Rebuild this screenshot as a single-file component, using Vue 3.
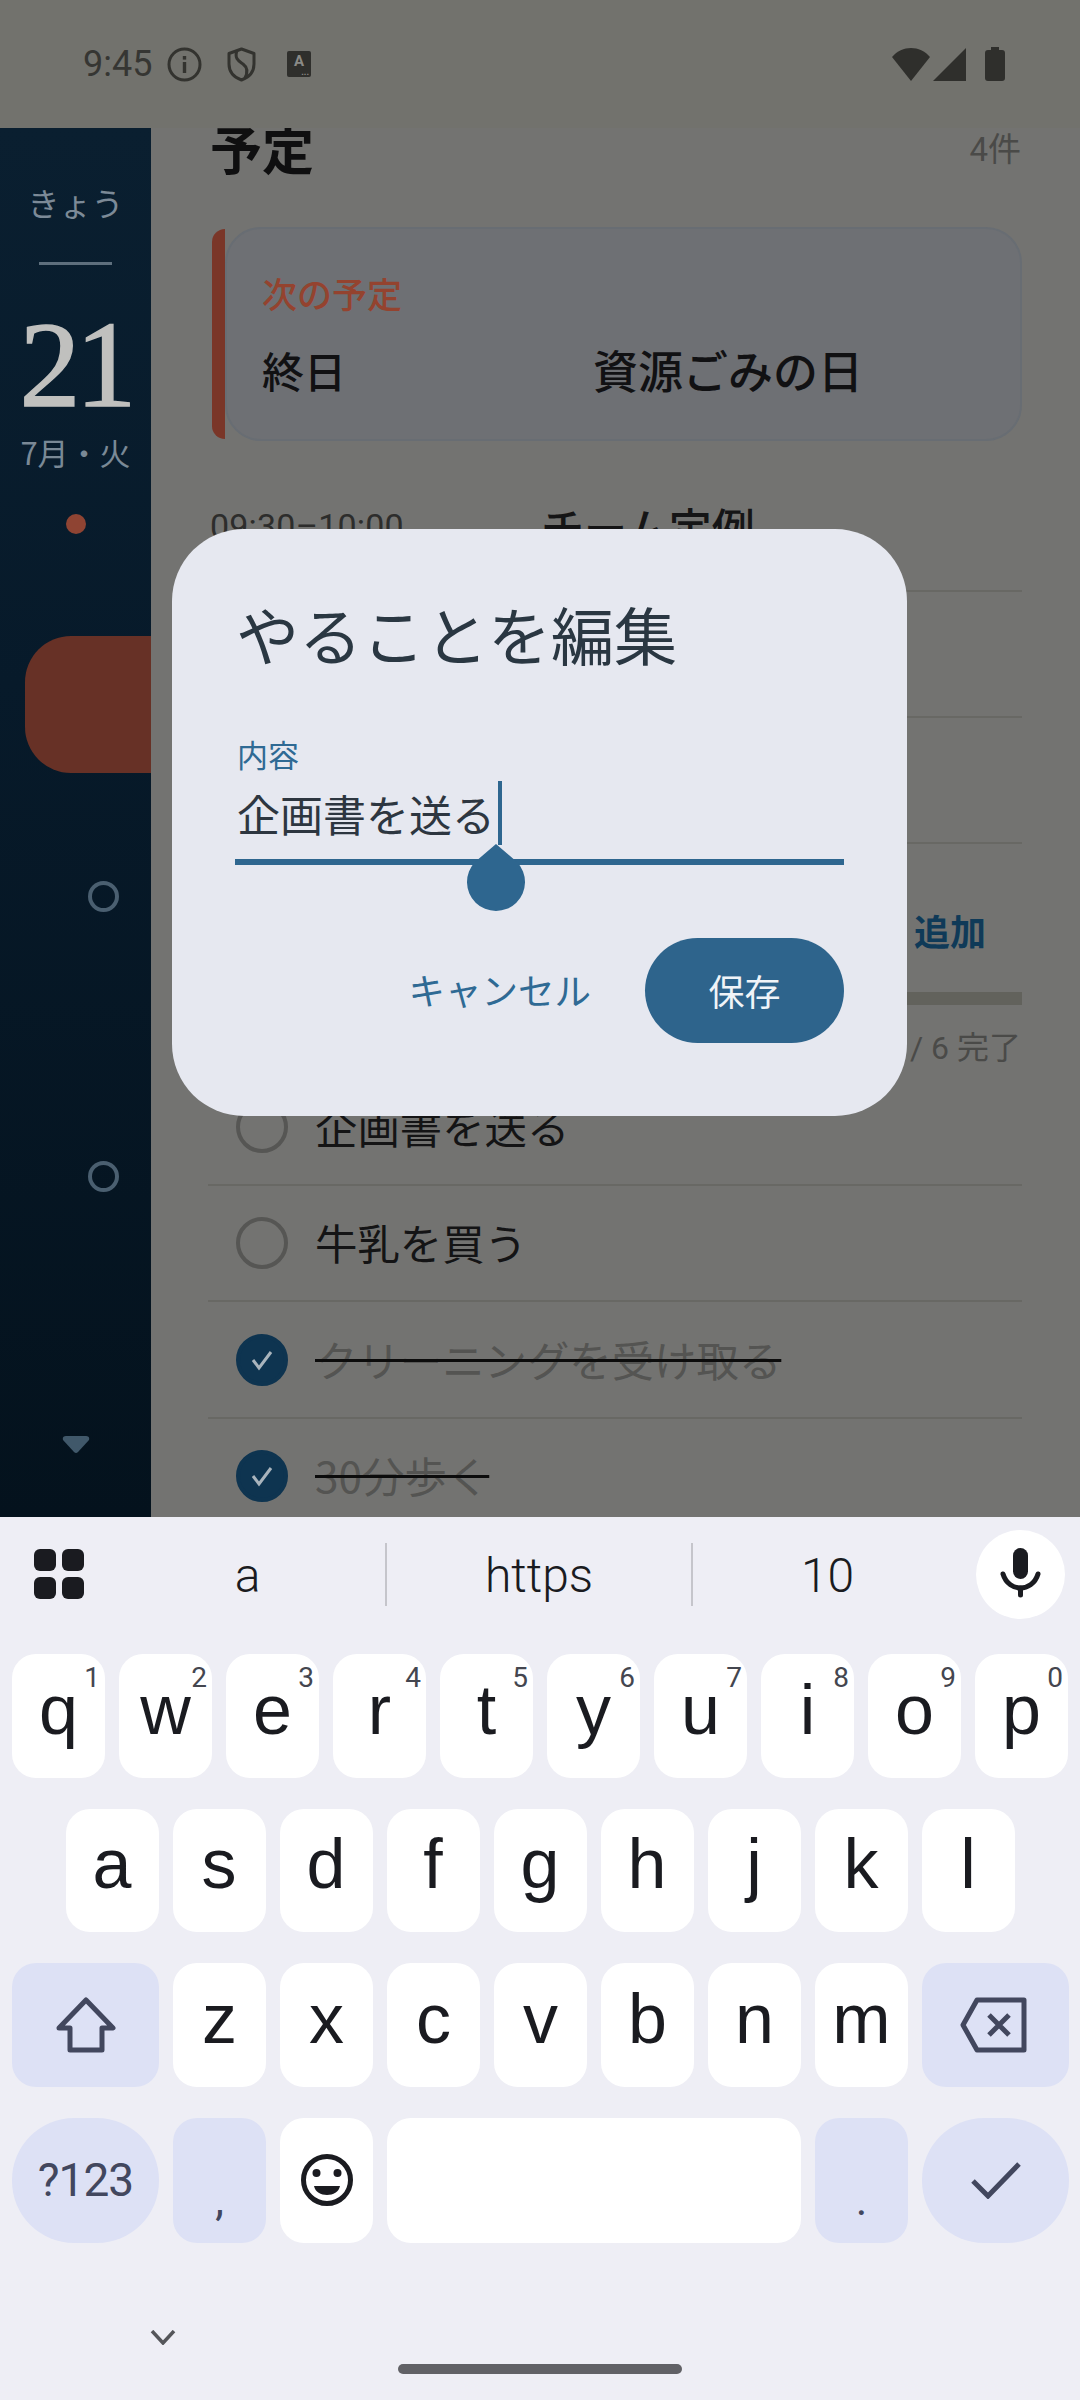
<template>
  <div class="screen">
    <div class="status-bar">
      <span class="clock">9:45</span>
      <svg class="ic-info" width="35" height="35" viewBox="0 0 35 35">
        <circle cx="17.5" cy="17.5" r="15.5" fill="none" stroke="#33332f" stroke-width="3" />
        <rect x="15.8" y="15" width="3.4" height="11" fill="#33332f" />
        <rect x="15.8" y="9" width="3.4" height="3.6" fill="#33332f" />
      </svg>
      <svg class="ic-shield" width="29" height="35" viewBox="0 0 29 35">
        <path d="M14.5 2 L27 6.5 V17 C27 25 21.500 30.500 14.500 33 C7.500 30.500 2 25 2 17 V6.500 Z" fill="none" stroke="#33332f" stroke-width="3" stroke-linejoin="round" />
        <path d="M10 3.500 C7 12 12 14 16 17 C20 20 21.500 24 18 31" fill="none" stroke="#33332f" stroke-width="3" />
      </svg>
      <div class="ic-a">
        <span>A</span>
        <i>...</i>
      </div>
      <div class="status-right">
        <svg width="38" height="33" viewBox="0 0 38 33"><path d="M0 9 C10 -3 28 -3 38 9 L19 33 Z" fill="#2f2f2c" /></svg>
        <svg width="33" height="33" viewBox="0 0 33 33"><path d="M33 0 V33 H0 Z" fill="#2f2f2c" /></svg>
        <svg class="ic-batt" width="20" height="34" viewBox="0 0 20 34"><path d="M6 0 H14 V3 H17 Q20 3 20 6 V31 Q20 34 17 34 H3 Q0 34 0 31 V6 Q0 3 3 3 H6 Z" fill="#2f2f2c" /></svg>
      </div>
    </div>

    <div class="body">
      <aside class="rail">
        <div class="rail-today">きょう</div>
        <div class="rail-line"></div>
        <div class="rail-day">21</div>
        <div class="rail-date">7月・火</div>
        <div class="rail-dot"></div>
        <div class="rail-pill"></div>
        <div class="rail-ring ring-a"></div>
        <div class="rail-ring ring-b"></div>
        <svg class="rail-tri" width="28" height="17" viewBox="0 0 28 17">
          <path d="M4 0 H24 Q28 0 27 4 L16 16 Q14 18 12 16 L1 4 Q0 0 4 0 Z" fill="#40586a" />
        </svg>
      </aside>

      <main class="content">
        <div class="head">
          <h2>予定</h2>
          <span>4件</span>
        </div>

        <div class="next-card">
          <div class="next-stripe"></div>
          <div class="next-body">
            <div class="next-label">次の予定</div>
            <div class="next-row">
              <span>終日</span>
              <span>資源ごみの日</span>
            </div>
          </div>
        </div>

        <div class="events">
          <div class="event" v-for="(ev, i) in events" :key="i">
            <span class="event-time">{{ ev.time }}</span>
            <span class="event-title">{{ ev.title }}</span>
          </div>
        </div>

        <div class="add-row">追加</div>
        <div class="progress"><div class="progress-fill" :style="{ width: doneRate + '%' }"></div></div>
        <div class="count">2 / 6 完了</div>

        <div class="todo" v-for="todo in todos" :key="todo.text">
          <span class="check" :class="{ on: todo.done }">
            <svg v-if="todo.done" width="28" height="24" viewBox="0 0 28 24">
              <path d="M5 12 L11 20 L23 4" fill="none" stroke="#a9b4bc" stroke-width="3" />
            </svg>
          </span>
          <span class="todo-text" :class="{ done: todo.done }">{{ todo.text }}</span>
        </div>
      </main>
    </div>

    <div class="keyboard">
      <div class="strip">
        <div class="apps"><i></i><i></i><i></i><i></i></div>
        <div class="sug sug-a">a</div>
        <div class="sep"></div>
        <div class="sug sug-b">https</div>
        <div class="sep"></div>
        <div class="sug sug-c">10</div>
        <div class="mic">
          <svg width="89" height="89" viewBox="0 0 89 89">
            <rect x="37" y="18" width="15" height="31" rx="7.500" fill="#1a1b20" />
            <path d="M27 44 C30 54 38 58 44.500 58 C51 58 59 54 62 44" fill="none" stroke="#1a1b20" stroke-width="5" stroke-linecap="round" />
            <path d="M44.500 58 V65" stroke="#1a1b20" stroke-width="5" stroke-linecap="round" />
          </svg>
        </div>
      </div>

      <div class="keys">
        <div class="row">
          <div class="key" v-for="k in row1" :key="k.ch">
            {{ k.ch }}<sup class="hint">{{ k.num }}</sup>
          </div>
        </div>
        <div class="row row-home">
          <div class="key" v-for="k in row2" :key="k">{{ k }}</div>
        </div>
        <div class="row">
          <div class="key wide accent">
            <svg width="60" height="56" viewBox="0 0 60 56">
              <path d="M30 3 L57 31 H46 V53 H14 V31 H3 Z" fill="none" stroke="#42475e" stroke-width="5" stroke-linejoin="round" />
            </svg>
          </div>
          <div class="key" v-for="k in row3" :key="k">{{ k }}</div>
          <div class="key wide accent">
            <svg class="ic-back" width="68" height="56" viewBox="0 0 68 56">
              <path d="M17 3 H64 V53 H17 L3 28 Z" fill="none" stroke="#42475e" stroke-width="5" stroke-linejoin="round" />
              <path d="M29 18 L49 38 M49 18 L29 38" fill="none" stroke="#42475e" stroke-width="5" />
            </svg>
          </div>
        </div>
        <div class="row">
          <div class="key wide accent pill sym">?123</div>
          <div class="key accent punct">,</div>
          <div class="key">
            <svg width="52" height="52" viewBox="0 0 52 52">
              <circle cx="26" cy="26" r="23.500" fill="none" stroke="#1a1b20" stroke-width="5" />
              <circle cx="15.500" cy="19" r="4" fill="#1a1b20" />
              <circle cx="36.500" cy="19" r="4" fill="#1a1b20" />
              <path d="M13 32 H39 C38 38 32 41 26 41 C20 41 14 38 13 32 Z" fill="#1a1b20" />
            </svg>
          </div>
          <div class="key space"></div>
          <div class="key accent punct">.</div>
          <div class="key wide accent pill">
            <svg width="52" height="38" viewBox="0 0 52 38">
              <path d="M3 20 L18 35 L49 3" fill="none" stroke="#42475e" stroke-width="5" />
            </svg>
          </div>
        </div>
      </div>

      <div class="kb-foot">
        <svg class="chevron" width="26" height="15" viewBox="0 0 26 15">
          <path d="M2 1 L13 13 L24 1" fill="none" stroke="#55565a" stroke-width="3.500" />
        </svg>
        <div class="home-bar"></div>
      </div>
    </div>

    <div class="dialog">
      <h3>やることを編集</h3>
      <div class="field">
        <label>内容</label>
        <div class="field-value">企画書を送る</div>
        <div class="caret"></div>
        <svg class="handle" width="58" height="67" viewBox="0 0 58 67">
          <path d="M29 0 L50 18 A29 29 0 1 1 8 18 Z" fill="#2e668f" />
        </svg>
      </div>
      <div class="actions">
        <span class="cancel">キャンセル</span>
        <span class="save">保存</span>
      </div>
    </div>
  </div>
</template>

<script setup>
const events = [
  { time: '09:30–10:00', title: 'チーム定例' },
  { time: '', title: '' },
  { time: '', title: '' }
]

const doneRate = 33

const todos = [
  { text: '企画書を送る', done: false },
  { text: '牛乳を買う', done: false },
  { text: 'クリーニングを受け取る', done: true },
  { text: '30分歩く', done: true }
]

const row1 = 'qwertyuiop'.split('').map((ch, i) => ({ ch, num: (i + 1) % 10 }))
const row2 = 'asdfghjkl'.split('')
const row3 = 'zxcvbnm'.split('')
</script>

<style scoped>
.screen {
  position: relative;
  width: 1080px;
  height: 2400px;
  overflow: hidden;
  background: #737371;
  font-family: "Noto Sans CJK JP", "Noto Sans", sans-serif;
  display: flex;
  flex-direction: column;
}

.status-bar {
  height: 128px;
  flex: none;
  background: #72726d;
  display: flex;
  align-items: center;
  padding: 0 75px 0 83px;
  box-sizing: border-box;
  color: #363633;
  position: relative;
  z-index: 1;
}

.clock {
  font-family: Roboto, sans-serif;
  font-size: 36px;
  width: 69px;
}

.ic-info {
  margin-left: 15px;
}

.ic-shield {
  margin-left: 25px;
}

.ic-a {
  margin-left: 31px;
  width: 24px;
  height: 26px;
  border-radius: 2px;
  background: #2f2f2c;
  color: #8a8a86;
  position: relative;
  font-family: Roboto, sans-serif;
  font-weight: 700;
  font-size: 15px;
  line-height: 20px;
  text-align: center;
}

.ic-a i {
  position: absolute;
  right: 2px;
  bottom: 2px;
  font-size: 9px;
  line-height: 6px;
  font-style: normal;
}

.status-right {
  margin-left: auto;
  display: flex;
  align-items: center;
  gap: 3px;
}

.ic-batt {
  margin-left: 16px;
}

.body {
  height: 1389px;
  flex: none;
  display: flex;
  overflow: hidden;
}

.rail {
  width: 151px;
  flex: none;
  background: linear-gradient(#0a1f30, #071a2a 40%, #04121d);
  display: flex;
  flex-direction: column;
  overflow: hidden;
}

.rail-today {
  margin-top: 54px;
  text-align: center;
  font-size: 32px;
  line-height: 40px;
  color: #7c8a97;
}

.rail-line {
  margin: 40px auto 0;
  width: 73px;
  height: 3px;
  background: #5e6f7d;
}

.rail-day {
  margin-top: 50px;
  height: 100px;
  line-height: 100px;
  text-align: center;
  font-family: "Liberation Serif", serif;
  font-size: 122px;
  letter-spacing: -5px;
  -webkit-text-stroke: 1.5px #c0c0be;
  color: #c0c0be;
}

.rail-date {
  margin-top: 17px;
  text-align: center;
  font-size: 31px;
  line-height: 40px;
  color: #7a8996;
}

.rail-dot {
  margin: 42px auto 0;
  width: 20px;
  height: 20px;
  border-radius: 50%;
  background: #8f4433;
}

.rail-pill {
  margin: 102px 0 0 25px;
  width: 126px;
  height: 137px;
  flex: none;
  border-radius: 46px 0 0 46px;
  background: #673126;
}

.rail-ring {
  width: 31px;
  height: 31px;
  flex: none;
  box-sizing: border-box;
  margin-left: 88px;
  border: 4px solid #4a5f70;
  border-radius: 50%;
}

.ring-a {
  margin-top: 108px;
}

.ring-b {
  margin-top: 249px;
}

.rail-tri {
  margin: 244px 0 0 62px;
  flex: none;
}

.content {
  flex: 1;
  min-width: 0;
  margin-top: -8px;
  padding: 0 58px 0 57px;
  box-sizing: border-box;
  background: #737371;
}

.head {
  display: flex;
  justify-content: space-between;
  align-items: center;
  height: 60px;
  padding: 0 1px 0 2px;
}

.head h2 {
  margin: -5px 0 0;
  font-size: 52px;
  line-height: 60px;
  font-weight: 700;
  color: #0f0f10;
}

.head span {
  font-family: Roboto, "Noto Sans CJK JP", sans-serif;
  font-size: 33px;
  color: #4a4a48;
  margin-top: -6px;
}

.next-card {
  margin: 47px 0 0 4px;
  height: 214px;
  display: flex;
}

.next-stripe {
  width: 13px;
  flex: none;
  margin: 2px 0;
  background: #7a3628;
  border-radius: 14px 0 0 14px;
}

.next-body {
  flex: 1;
  box-sizing: border-box;
  padding: 41px 0 0 35px;
  border: 2px solid #686d73;
  border-radius: 36px;
  background: #6e7074;
}

.next-label {
  font-size: 35px;
  line-height: 46px;
  font-weight: 500;
  color: #94432f;
}

.next-row {
  margin-top: 24px;
  display: grid;
  grid-template-columns: 331px 1fr;
  font-size: 42px;
  line-height: 60px;
  font-weight: 500;
  color: #111113;
}

.next-row span:last-child {
  font-size: 45px;
}

.events {
  margin-top: 25px;
}

.event {
  height: 126px;
  box-sizing: border-box;
  border-bottom: 2px solid #686864;
  display: grid;
  grid-template-columns: 331px 1fr;
  align-items: center;
  padding: 0 0 4px 2px;
  color: #151516;
}

.event-time {
  font-family: Roboto, sans-serif;
  font-size: 34px;
  letter-spacing: 0.2px;
  color: #2d2d2c;
}

.event-title {
  font-size: 43px;
  font-weight: 500;
}

.add-row {
  margin-top: 61px;
  height: 50px;
  line-height: 50px;
  text-align: right;
  padding-right: 36px;
  font-size: 36px;
  font-weight: 700;
  color: #0f3a58;
}

.progress {
  margin-top: 37px;
  height: 13px;
  background: #62625c;
}

.progress-fill {
  height: 100%;
  background: #0f3a58;
}

.count {
  margin-top: 21px;
  height: 44px;
  line-height: 44px;
  text-align: right;
  padding-right: 1px;
  margin-bottom: -1px;
  font-size: 32px;
  color: #4a4a48;
  font-family: Roboto, "Noto Sans CJK JP", sans-serif;
}

.todo {
  height: 116.500px;
  box-sizing: border-box;
  display: flex;
  align-items: center;
  padding: 1px 0 0 28px;
  border-bottom: 2px solid #686864;
}

.check {
  width: 52px;
  height: 52px;
  box-sizing: border-box;
  border: 4px solid #565654;
  border-radius: 50%;
  margin-right: 27px;
  display: flex;
  align-items: center;
  justify-content: center;
}

.check.on {
  background: #0e3450;
  border-color: #0e3450;
}

.todo-text {
  font-size: 42.400px;
  margin-top: -3px;
  color: #141415;
}

.todo-text.done {
  color: #545452;
  text-decoration: line-through;
  text-decoration-color: #0c0c0c;
  text-decoration-thickness: 3px;
}

.keyboard {
  flex: none;
  height: 883px;
  background: #eeeef5;
  display: flex;
  flex-direction: column;
}

.strip {
  height: 137px;
  flex: none;
  box-sizing: border-box;
  padding-top: 13px;
  display: flex;
  align-items: flex-start;
  font-family: Roboto, sans-serif;
  font-size: 48px;
  font-weight: 300;
  color: #1a1b20;
}

.apps {
  margin: 19px 26px 0 34px;
  width: 50px;
  display: grid;
  grid-template-columns: 22px 22px;
  grid-auto-rows: 22px;
  gap: 6px;
}

.apps i {
  background: #1a1b20;
  border-radius: 6px;
}

.sug {
  height: 89px;
  line-height: 91px;
  text-align: center;
}

.sug-a {
  width: 275px;
}

.sug-b {
  width: 304px;
}

.sug-c {
  width: 269px;
}

.sep {
  width: 2px;
  height: 63px;
  margin-top: 13px;
  background: #c5c5cb;
}

.mic {
  margin-left: 14px;
  width: 89px;
  height: 89px;
  border-radius: 50%;
  background: #fff;
}

.keys {
  padding: 0 12px;
  display: flex;
  flex-direction: column;
  gap: 31px;
}

.row {
  display: flex;
  gap: 14px;
  height: 123.500px;
}

.row:last-child {
  height: 125px;
}

.row-home {
  padding: 0 53.500px;
}

.key {
  position: relative;
  width: 93px;
  flex: none;
  border-radius: 24px;
  background: #fff;
  display: flex;
  align-items: center;
  justify-content: center;
  padding-bottom: 12px;
  box-sizing: border-box;
  font-family: "Liberation Sans", Arial, sans-serif;
  font-size: 70px;
  color: #1a1b20;
}

.key svg {
  margin-top: 12px;
}

.key .ic-back {
  margin-right: 4px;
}

.hint {
  position: absolute;
  top: 10px;
  right: 5px;
  font-family: Roboto, sans-serif;
  font-size: 28px;
  line-height: 28px;
  color: #44464f;
}

.wide {
  width: 147px;
}

.accent {
  background: #dde1f5;
  color: #42475e;
}

.pill {
  border-radius: 62px;
}

.sym {
  font-family: Roboto, sans-serif;
  font-size: 46px;
  letter-spacing: -1px;
  padding-bottom: 0;
}

.punct {
  font-family: Roboto, sans-serif;
  font-size: 44px;
  padding: 40px 0 0;
}

.space {
  width: 414px;
}

.kb-foot {
  display: flex;
  flex-direction: column;
}

.chevron {
  margin: 87px 0 0 150px;
}

.home-bar {
  align-self: center;
  margin-top: 19px;
  width: 284px;
  height: 10px;
  border-radius: 5px;
  background: #616166;
}

.dialog {
  position: absolute;
  left: 172px;
  top: 529px;
  width: 735px;
  height: 587px;
  box-sizing: border-box;
  padding: 73px 63px 0 64px;
  border-radius: 72px;
  background: #e6e8f0;
}

.dialog h3 {
  margin: 0;
  font-size: 63px;
  line-height: 62px;
  font-weight: 400;
  color: #2a3742;
}

.field {
  position: relative;
  margin: 72px 0 0 -1px;
  height: 129px;
  box-sizing: border-box;
  padding-left: 2px;
  border-bottom: 6px solid #2e668f;
}

.field label {
  display: block;
  font-size: 31px;
  line-height: 36px;
  margin-top: 4px;
  color: #2f6a94;
}

.field-value {
  margin-top: 15px;
  font-size: 43px;
  line-height: 52px;
  color: #2d3640;
}

.caret {
  position: absolute;
  left: 263px;
  top: 45px;
  width: 4px;
  height: 64px;
  background: #2e668f;
}

.handle {
  position: absolute;
  left: 232px;
  top: 108px;
}

.actions {
  margin-top: 73px;
  display: flex;
  justify-content: flex-end;
  align-items: center;
}

.cancel {
  font-size: 36.500px;
  color: #2f6a94;
  margin-right: 54px;
  padding-bottom: 2px;
}

.save {
  width: 199px;
  height: 105px;
  box-sizing: border-box;
  padding-bottom: 2px;
  border-radius: 53px;
  background: #2e648c;
  color: #f0f4f8;
  font-size: 36px;
  display: flex;
  align-items: center;
  justify-content: center;
}
</style>

<style>
html,
body {
  margin: 0;
  padding: 0;
}
</style>
